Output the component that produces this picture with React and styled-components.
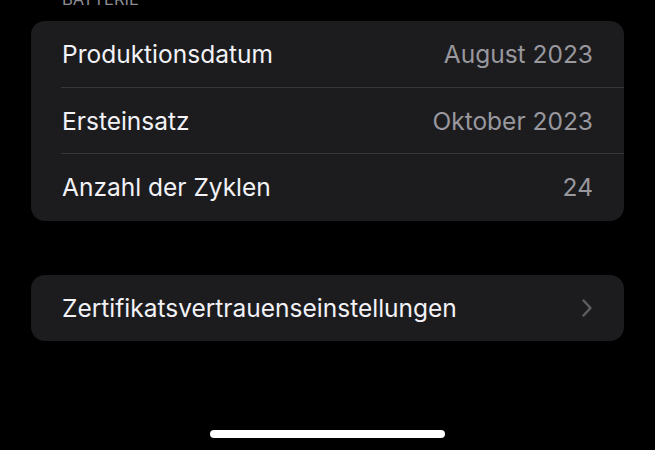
import React from "react";
import styled, { createGlobalStyle } from "styled-components";

const Global = createGlobalStyle`
  html, body { margin: 0; padding: 0; background: #000; }
  body { font-family: Inter, "Noto Sans", sans-serif; -webkit-font-smoothing: antialiased; }
`;

const Screen = styled.div`
  width: 655px;
  height: 450px;
  background: #000;
  overflow: hidden;
  display: flex;
  flex-direction: column;
  padding: 0 31px;
  box-sizing: border-box;
  position: relative;
`;

const SectionHeader = styled.div`
  margin-top: -11px;
  height: 32px;
  padding-left: 31px;
  color: #8d8d93;
  font-size: 16.5px;
  letter-spacing: 0;
  text-transform: uppercase;
  line-height: 20px;
`;

const Card = styled.div`
  background: #1c1c1e;
  border-radius: 14px;
  overflow: hidden;
  margin-bottom: ${(p) => p.$gap || 0}px;
`;

const Row = styled.div`
  height: 66.5px;
  display: flex;
  align-items: center;
  justify-content: space-between;
  padding: 0 31px 0 31px;
  position: relative;
  ${(p) =>
    p.$divider &&
    `&::after {
      content: "";
      position: absolute;
      left: 30px;
      right: 0;
      bottom: 0;
      height: 1px;
      background: #38383a;
    }`}
`;

const Label = styled.span`
  color: #f2f2f7;
  font-size: 24.5px;
  letter-spacing: 0;
`;

const Value = styled.span`
  color: #98989e;
  font-size: 24.5px;
  letter-spacing: 0;
`;

const Chevron = styled.svg`
  width: 12px;
  height: 20px;
`;

const HomeIndicator = styled.div`
  position: absolute;
  left: 210px;
  top: 430px;
  width: 235px;
  height: 8px;
  border-radius: 4px;
  background: #fff;
`;

export default function App() {
  const rows = [
    ["Produktionsdatum", "August 2023"],
    ["Ersteinsatz", "Oktober 2023"],
    ["Anzahl der Zyklen", "24"],
  ];
  return (
    <>
      <Global />
      <Screen>
        <SectionHeader>Batterie</SectionHeader>
        <Card $gap={54}>
          {rows.map(([l, v], i) => (
            <Row key={l} $divider={i < rows.length - 1}>
              <Label>{l}</Label>
              <Value>{v}</Value>
            </Row>
          ))}
        </Card>
        <Card>
          <Row>
            <Label>Zertifikatsvertrauenseinstellungen</Label>
            <Chevron viewBox="0 0 12 20">
              <path d="M2.5 2.5 L9.5 10 L2.5 17.5" fill="none" stroke="#5e5e63" strokeWidth="2.4" strokeLinecap="round" strokeLinejoin="round" />
            </Chevron>
          </Row>
        </Card>
        <HomeIndicator />
      </Screen>
    </>
  );
}
